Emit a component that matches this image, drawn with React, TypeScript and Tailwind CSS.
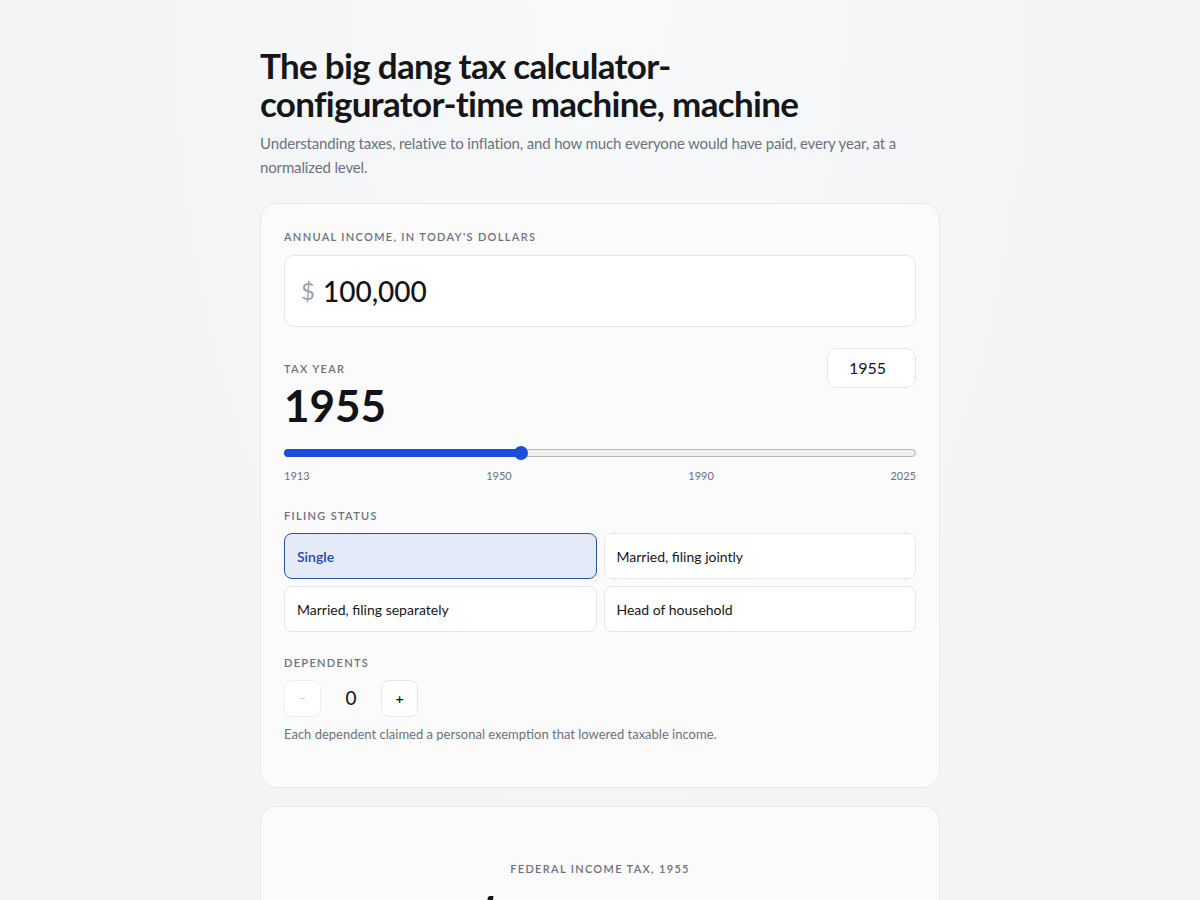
import React from 'react';

const labelCls = "text-[11px] font-semibold uppercase tracking-[0.12em] text-[#6b7280]";

const statuses = ['Single', 'Married, filing jointly', 'Married, filing separately', 'Head of household'];

export default function App() {
  const year = 1955;
  const pct = ((year - 1913) / (2025 - 1913)) * 100;
  return (
    <div
      className="min-h-screen w-full bg-[#f3f4f6] bg-[radial-gradient(ellipse_at_top,#f8f9fb_0%,#f3f4f6_60%)] text-[#111318]"
      style={{ fontFamily: 'Lato, "Noto Sans", sans-serif' }}
    >
      <main className="mx-auto w-[680px] pt-[46px] pb-10">
        <h1 className="text-[35px] font-bold leading-[38px] tracking-[-0.02em] text-[#15161a]">
          The big dang tax calculator-<br />configurator-time machine, machine
        </h1>
        <p className="mt-[9px] text-[15px] leading-6 tracking-[-0.01em] text-[#6b7280]">
          Understanding taxes, relative to inflation, and how much everyone would have paid, every year, at a normalized level.
        </p>

        <section className="mt-[24px] rounded-2xl border border-[#e5e7eb] bg-[#fbfbfb] px-[23px] pt-[25px] pb-[43px]">
          <div className={labelCls}>Annual income, in today's dollars</div>
          <div className="mt-[9px] flex h-[72px] items-center rounded-[10px] border border-[#e5e7eb] bg-white px-[16px]">
            <span className="text-[24px] text-[#9ca3af]">$</span>
            <span className="ml-[8px] text-[28px] font-medium text-[#111318]">100,000</span>
          </div>

          <div className="mt-[21px] flex items-start justify-between">
            <div>
              <div className={`${labelCls} mt-[13px]`}>Tax year</div>
              <div className="mt-[4px] text-[44px] font-bold leading-[48px] text-[#111318]">1955</div>
            </div>
            <div className="flex h-[40px] w-[89px] items-center rounded-[10px] border border-[#e5e7eb] bg-white pl-[21px] text-[16px] text-[#111318]">
              1955
            </div>
          </div>

          <div className="relative mt-[16px] h-[16px]">
            <div className="absolute left-0 right-0 top-[4px] h-[8px] rounded-full border border-[#b8b8b8] bg-[#efefef]" />
            <div
              className="absolute left-0 top-[4px] h-[8px] rounded-full bg-[#1d4ed8]"
              style={{ width: `${pct}%` }}
            />
            <div
              className="absolute top-[1px] h-[14px] w-[14px] -translate-x-1/2 rounded-full bg-[#1d4ed8]"
              style={{ left: `${pct}%` }}
            />
          </div>
          <div className="mt-[7px] flex justify-between text-[11px] text-[#6b7280]">
            <span>1913</span>
            <span>1950</span>
            <span>1990</span>
            <span>2025</span>
          </div>

          <div className={`${labelCls} mt-[23px]`}>Filing status</div>
          <div className="mt-[9px] grid grid-cols-2 gap-[7px]">
            {statuses.map((s, i) => (
              <div
                key={s}
                className={
                  i === 0
                    ? "flex h-[46px] items-center rounded-[8px] border border-[#2c4fa8] bg-[#e4eaf7] px-[12px] text-[14px] font-semibold text-[#1e46b4]"
                    : "flex h-[46px] items-center rounded-[8px] border border-[#e5e7eb] bg-white px-[12px] text-[14px] text-[#15161a]"
                }
              >
                {s}
              </div>
            ))}
          </div>

          <div className={`${labelCls} mt-[23px]`}>Dependents</div>
          <div className="mt-[8px] flex items-center">
            <div className="flex h-[37px] w-[37px] items-center justify-center rounded-[8px] border border-[#eeeff1] bg-white text-[12px] text-[#c0c4cc]">–</div>
            <div className="w-[60px] text-center text-[19px] text-[#111318]">0</div>
            <div className="flex h-[37px] w-[37px] items-center justify-center rounded-[8px] border border-[#e5e7eb] bg-white text-[14px] font-semibold text-[#111318]">+</div>
          </div>
          <p className="mt-[8px] text-[13px] text-[#6b7280]">
            Each dependent claimed a personal exemption that lowered taxable income.
          </p>
        </section>

        <section className="mt-[18px] h-[300px] rounded-2xl border border-[#e5e7eb] bg-[#fbfbfb] pt-[54px] text-center">
          <div className={labelCls}>Federal income tax, 1955</div>
          <div className="mt-[14px] text-[72px] font-bold leading-none text-[#111318]">$20,942</div>
        </section>
      </main>
    </div>
  );
}
